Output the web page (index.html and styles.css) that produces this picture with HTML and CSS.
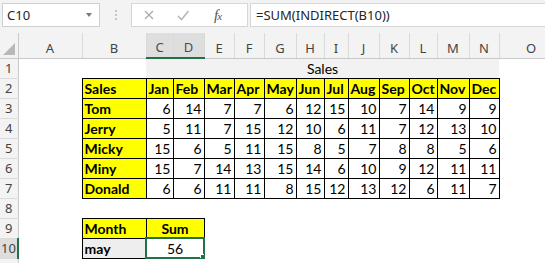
FILE: index.html
```html
<!DOCTYPE html>
<html lang="en">
<head>
  <meta charset="UTF-8" />
  <title>Sales - INDIRECT</title>
  <link rel="stylesheet" href="styles.css">
</head>
<body>
  <div class="formula-bar">
    <div class="name-box"><span>C10</span><span class="caret"></span></div>
    <div class="grip">
      <svg width="4" height="12" viewBox="0 0 4 12"><circle cx="2" cy="2" r="1" fill="#b5b5b5"/><circle cx="2" cy="6" r="1" fill="#b5b5b5"/><circle cx="2" cy="10" r="1" fill="#b5b5b5"/></svg>
    </div>
    <div class="fx-buttons">
      <svg class="btn-icon" width="14" height="14" viewBox="0 0 14 14"><path d="M3 3 L11 11 M11 3 L3 11" stroke="#a9a9a9" stroke-width="1.2" fill="none"/></svg>
      <svg class="btn-icon" width="14" height="14" viewBox="0 0 14 14"><path d="M2 8 L5.5 11.5 L12.5 3" stroke="#b8b8b8" stroke-width="1.6" fill="none"/></svg>
      <span class="fx">f<small>x</small></span>
    </div>
    <div class="formula">=SUM(INDIRECT(B10))</div>
  </div>

  <table class="sheet">
    <colgroup>
      <col style="width:18px"><col style="width:64px"><col style="width:64px">
      <col style="width:27px"><col style="width:31px"><col style="width:30px"><col style="width:30px">
      <col style="width:32px"><col style="width:28px"><col style="width:24px"><col style="width:31px">
      <col style="width:30px"><col style="width:28px"><col style="width:32px"><col style="width:30px">
      <col style="width:64px">
    </colgroup>
    <thead>
      <tr>
        <th class="corner"><span class="tri"></span></th>
        <th>A</th><th>B</th><th class="sel">C</th><th class="sel">D</th><th>E</th><th>F</th><th>G</th>
        <th>H</th><th>I</th><th>J</th><th>K</th><th>L</th><th>M</th><th>N</th><th>O</th>
      </tr>
    </thead>
    <tbody>
      <tr>
        <td class="rh">1</td><td></td><td></td>
        <td class="title" colspan="12">Sales</td><td></td>
      </tr>
      <tr>
        <td class="rh">2</td><td></td>
        <td class="b hd">Sales</td><td class="b hd">Jan</td><td class="b hd">Feb</td><td class="b hd">Mar</td>
        <td class="b hd">Apr</td><td class="b hd">May</td><td class="b hd">Jun</td><td class="b hd">Jul</td>
        <td class="b hd">Aug</td><td class="b hd">Sep</td><td class="b hd">Oct</td><td class="b hd">Nov</td>
        <td class="b hd">Dec</td><td></td>
      </tr>
      <tr>
        <td class="rh">3</td><td></td><td class="b hd">Tom</td>
        <td class="b n">6</td><td class="b n">14</td><td class="b n">7</td><td class="b n">7</td><td class="b n">6</td><td class="b n">12</td>
        <td class="b n">15</td><td class="b n">10</td><td class="b n">7</td><td class="b n">14</td><td class="b n">9</td><td class="b n">9</td><td></td>
      </tr>
      <tr>
        <td class="rh">4</td><td></td><td class="b hd">Jerry</td>
        <td class="b n">5</td><td class="b n">11</td><td class="b n">7</td><td class="b n">15</td><td class="b n">12</td><td class="b n">10</td>
        <td class="b n">6</td><td class="b n">11</td><td class="b n">7</td><td class="b n">12</td><td class="b n">13</td><td class="b n">10</td><td></td>
      </tr>
      <tr>
        <td class="rh">5</td><td></td><td class="b hd">Micky</td>
        <td class="b n">15</td><td class="b n">6</td><td class="b n">5</td><td class="b n">11</td><td class="b n">15</td><td class="b n">8</td>
        <td class="b n">5</td><td class="b n">7</td><td class="b n">8</td><td class="b n">8</td><td class="b n">5</td><td class="b n">6</td><td></td>
      </tr>
      <tr>
        <td class="rh">6</td><td></td><td class="b hd">Miny</td>
        <td class="b n">15</td><td class="b n">7</td><td class="b n">14</td><td class="b n">13</td><td class="b n">15</td><td class="b n">14</td>
        <td class="b n">6</td><td class="b n">10</td><td class="b n">9</td><td class="b n">12</td><td class="b n">11</td><td class="b n">11</td><td></td>
      </tr>
      <tr>
        <td class="rh">7</td><td></td><td class="b hd">Donald</td>
        <td class="b n">6</td><td class="b n">6</td><td class="b n">11</td><td class="b n">11</td><td class="b n">8</td><td class="b n">15</td>
        <td class="b n">12</td><td class="b n">13</td><td class="b n">12</td><td class="b n">6</td><td class="b n">11</td><td class="b n">7</td><td></td>
      </tr>
      <tr>
        <td class="rh">8</td><td></td><td></td><td></td><td></td><td></td><td></td><td></td>
        <td></td><td></td><td></td><td></td><td></td><td></td><td></td><td></td>
      </tr>
      <tr>
        <td class="rh">9</td><td></td><td class="b hd">Month</td><td class="b hd c" colspan="2">Sum</td>
        <td></td><td></td><td></td><td></td><td></td><td></td><td></td><td></td><td></td><td></td><td></td>
      </tr>
      <tr>
        <td class="rh sel">10</td><td></td><td class="b lbl">may</td><td class="b c active" colspan="2">56</td>
        <td></td><td></td><td></td><td></td><td></td><td></td><td></td><td></td><td></td><td></td><td></td>
      </tr>
      <tr>
        <td class="rh"></td><td></td><td></td><td></td><td></td><td></td><td></td><td></td>
        <td></td><td></td><td></td><td></td><td></td><td></td><td></td><td></td>
      </tr>
    </tbody>
  </table>
</body>
</html>
```

FILE: styles.css
```css
body {
  margin: 0;
  width: 545px;
  height: 263px;
  overflow: hidden;
  background: #fff;
  font-family: Lato, "Liberation Sans", sans-serif;
}

/* formula bar */
.formula-bar {
  display: flex;
  align-items: flex-start;
  height: 33px;
  padding: 3px 0 0 2px;
  box-sizing: border-box;
  background: #f3f3f3;
  font-family: "Noto Sans", sans-serif;
  font-size: 13px;
  color: #262626;
}

.name-box {
  width: 98px;
  height: 24px;
  box-sizing: border-box;
  border: 1px solid #cfcfcf;
  background: #fff;
  display: flex;
  align-items: center;
  justify-content: space-between;
  padding: 0 7px 0 4px;
}

.caret {
  border-top: 4px solid #7a7a7a;
  border-left: 3.5px solid transparent;
  border-right: 3.5px solid transparent;
}

.grip {
  width: 31px;
  height: 24px;
  display: flex;
  align-items: center;
  justify-content: center;
}

.fx-buttons {
  width: 117px;
  height: 24px;
  box-sizing: border-box;
  border: 1px solid #d6d6d6;
  background: #fff;
  display: flex;
  align-items: center;
  gap: 20px;
  padding-left: 10px;
}

.fx {
  margin-left: 4px;
  font-family: "Liberation Serif", serif;
  font-style: italic;
  font-size: 15px;
  color: #555;
  letter-spacing: -1px;
}

.fx small {
  font-size: 11px;
}

.formula {
  flex: 1;
  height: 24px;
  margin-left: 2px;
  box-sizing: border-box;
  border: 1px solid #d6d6d6;
  border-right: none;
  background: #fff;
  padding-left: 5px;
  line-height: 22px;
}

/* grid */
.sheet {
  border-collapse: collapse;
  table-layout: fixed;
  width: 563px;
  font-size: 14px;
  color: #000;
}

.sheet th {
  height: 24px;
  padding: 0;
  background: #f3f3f3;
  border-right: 1px solid #dadada;
  border-bottom: 1px solid #c9c9c9;
  font-family: "Noto Sans", sans-serif;
  font-weight: normal;
  font-size: 13px;
  color: #444;
  vertical-align: bottom;
  line-height: 20px;
}

.sheet th.sel {
  background: #dedede;
  color: #4a4a4a;
  border-bottom: 2px solid #217346;
}

.sheet th.corner {
  position: relative;
  border-right: 1px solid #c9c9c9;
}

.tri {
  position: absolute;
  right: 3px;
  bottom: 3px;
  border-bottom: 12px solid #b9b9b9;
  border-left: 12px solid transparent;
}

.sheet tr {
  height: 20px;
}

.sheet td {
  padding: 0 2px 1px;
  vertical-align: bottom;
  line-height: 16px;
  white-space: nowrap;
  overflow: hidden;
}

.sheet td.rh {
  padding: 0;
  background: #f3f3f3;
  border-right: 1px solid #c9c9c9;
  border-bottom: 1px solid #dcdcdc;
  font-family: "Noto Sans", sans-serif;
  font-size: 13px;
  color: #444;
  text-align: center;
  vertical-align: middle;
}

.sheet td.rh.sel {
  background: #dedede;
  border-right: 2px solid #217346;
}

.b {
  border: 1px solid #000;
}

.hd {
  background: #ffff00;
  font-weight: bold;
}

.n {
  text-align: right;
}

.c {
  text-align: center;
}

.title {
  background: #f2f2f2;
  text-align: center;
}

.lbl {
  background: #eeeeee;
  font-weight: bold;
}

.active {
  position: relative;
  outline: 2px solid #217346;
  outline-offset: -1px;
}

.active::after {
  content: "";
  position: absolute;
  right: -3px;
  bottom: -3px;
  width: 5px;
  height: 5px;
  background: #217346;
  border: 1px solid #fff;
}
```
